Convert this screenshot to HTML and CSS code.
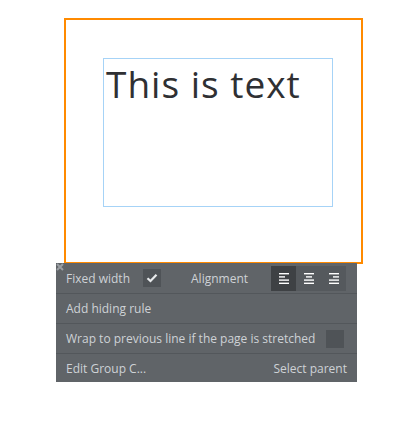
FILE: index.html
```html
<!DOCTYPE html>
<html lang="en">
<head>
    <meta charset="UTF-8">
    <title>Text element editor</title>
    <link rel="stylesheet" href="styles.css">
</head>
<body>
    <!-- Group on the canvas -->
    <div class="group-box">
        <div class="text-box">
            <span class="text-content">This is text</span>
        </div>
    </div>

    <!-- Property popover -->
    <div class="prop-panel">
        <svg class="close-icon" width="8" height="8" viewBox="0 0 8 8">
            <path d="M1 1 L7 7 M7 1 L1 7" stroke="#9a9ea3" stroke-width="2"/>
        </svg>

        <div class="prop-row">
            <span class="prop-label">Fixed width</span>
            <span class="checkbox checked">
                <svg width="12" height="10" viewBox="0 0 12 10">
                    <path d="M1.5 5.2 L4.5 8 L10.5 1.8" fill="none" stroke="#e8eaec" stroke-width="2.2"/>
                </svg>
            </span>
            <span class="prop-label align-label">Alignment</span>
            <div class="align-group">
                <span class="align-btn active">
                    <svg width="10" height="11" viewBox="0 0 10 11">
                        <rect x="0" y="0" width="10" height="1.4" fill="#fff"/>
                        <rect x="0" y="3.2" width="6" height="1.4" fill="#fff"/>
                        <rect x="0" y="6.4" width="10" height="1.4" fill="#fff"/>
                        <rect x="0" y="9.6" width="10" height="1.4" fill="#fff"/>
                    </svg>
                </span>
                <span class="align-btn">
                    <svg width="10" height="11" viewBox="0 0 10 11">
                        <rect x="0" y="0" width="10" height="1.4" fill="#fff"/>
                        <rect x="2" y="3.2" width="6" height="1.4" fill="#fff"/>
                        <rect x="0" y="6.4" width="10" height="1.4" fill="#fff"/>
                        <rect x="0" y="9.6" width="10" height="1.4" fill="#fff"/>
                    </svg>
                </span>
                <span class="align-btn">
                    <svg width="10" height="11" viewBox="0 0 10 11">
                        <rect x="0" y="0" width="10" height="1.4" fill="#fff"/>
                        <rect x="4" y="3.2" width="6" height="1.4" fill="#fff"/>
                        <rect x="0" y="6.4" width="10" height="1.4" fill="#fff"/>
                        <rect x="0" y="9.6" width="10" height="1.4" fill="#fff"/>
                    </svg>
                </span>
            </div>
        </div>

        <div class="prop-row">
            <span class="prop-label">Add hiding rule</span>
        </div>

        <div class="prop-row">
            <span class="prop-label">Wrap to previous line if the page is stretched</span>
            <span class="checkbox wrap-check"></span>
        </div>

        <div class="prop-row last">
            <span class="prop-label">Edit Group C...</span>
            <span class="prop-label push-right">Select parent</span>
        </div>
    </div>
</body>
</html>
```

FILE: styles.css
```css
body {
    margin: 0;
    background: #fff;
    font-family: "Open Sans", Arial, sans-serif;
}
.group-box {
    box-sizing: border-box;
    width: 299px;
    height: 246px;
    margin: 18px 0 0 64px;
    border: 2px solid #ff8a00;
    padding: 38px 0 0 37px;
}
.text-box {
    box-sizing: border-box;
    width: 230px;
    height: 149px;
    border: 1px solid #a6d3f7;
    padding: 4px 0 0 2px;
}
.text-content {
    font-family: "Open Sans", sans-serif;
    font-size: 37px;
    letter-spacing: 1px;
    color: #2f3033;
    line-height: 42px;
}
.prop-panel {
    position: absolute;
    left: 56px;
    top: 263px;
    width: 301px;
    background: #606468;
    color: #ced2d6;
    font-size: 12px;
}
.prop-label {
    white-space: nowrap;
}
.close-icon {
    position: absolute;
    left: 0;
    top: 0;
}
.prop-row {
    display: flex;
    align-items: center;
    height: 29px;
    padding: 0 10px;
    border-bottom: 1px solid #53575b;
}
.prop-row:first-of-type {
    height: 30px;
}
.prop-row.last {
    height: 28px;
    border-bottom: none;
}
.checkbox {
    flex: none;
    width: 18px;
    height: 18px;
    background: #4f5357;
    display: flex;
    align-items: center;
    justify-content: center;
}
.checkbox.checked {
    margin-left: 13px;
}
.wrap-check {
    margin-left: auto;
    margin-right: 3px;
}
.align-label {
    margin-left: 30px;
}
.align-group {
    display: flex;
    margin-left: auto;
    margin-right: 1px;
    background: #55595d;
}
.align-btn {
    width: 25px;
    height: 25px;
    display: flex;
    align-items: center;
    justify-content: center;
}
.align-btn.active {
    background: #3e4144;
}
.push-right {
    margin-left: auto;
}
```
